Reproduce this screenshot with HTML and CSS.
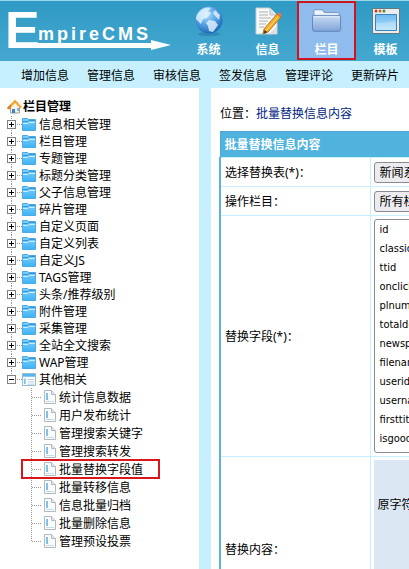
FILE: index.html
```
<!DOCTYPE html>
<html lang="zh-CN">
<head>
<meta charset="utf-8">
<title>EmpireCMS</title>
<link rel="stylesheet" href="styles.css">
</head>
<body>
<svg class="defs" aria-hidden="true">
  <defs>
    <linearGradient id="fold" x1="0" y1="0" x2="0" y2="1"><stop offset="0" stop-color="#7fd0fa"/><stop offset="1" stop-color="#3fb2f4"/></linearGradient>
    <symbol id="folder" viewBox="0 0 14 13"><path d="M.5.5h5l1 1h7v11H.5z" fill="url(#fold)" stroke="#4aa9e6"/><path d="M1 5.500h5l1-1h6" fill="none" stroke="#c9edff"/><path d="M1 3.500h5l1-1h6" fill="none" stroke="#3596d8"/></symbol>
    <symbol id="page" viewBox="0 0 12 14"><path d="M.5.5h7l4 4v9H.5z" fill="#fbfcfd" stroke="#b0b9c0"/><path d="M7.500.5v4h4" fill="#e6eaee" stroke="#b0b9c0"/><path d="M2 3h2v7H2z" fill="#7fc1ea"/><path d="M2 11.500h8" stroke="#c5dcea"/></symbol>
    <symbol id="panel" viewBox="0 0 15 14"><path d="M.5.5h14v13H.5z" fill="#fff" stroke="#8fb4cd"/><path d="M1 1h13v3H1z" fill="#58b4ee"/><path d="M2 6h2v6H2z" fill="#7cc3ee"/><path d="M6 7h7M6 9.500h7M6 12h7" stroke="#a9c9dc"/></symbol>
  </defs>
</svg>
<header class="top">
  <svg class="logo" viewBox="0 0 164 40" role="img" aria-label="EmpireCMS">
    <text class="logo-initial" x="-4" y="37">E</text>
    <text class="logo-name" x="29" y="29">mpireCMS</text>
    <path d="M4 32h138v-3l20 5-20 5v-2H4z" fill="#fff"/>
  </svg>
  <nav class="modules">
    <a href="#system">
      <svg viewBox="0 0 30 30"><defs><radialGradient id="globe" cx=".4" cy=".3" r=".7"><stop offset="0" stop-color="#b9e2ff"/><stop offset=".5" stop-color="#5aa6e8"/><stop offset="1" stop-color="#1c6abb"/></radialGradient></defs><ellipse cx="15" cy="28" rx="11" ry="2" fill="#1c6a94" opacity=".4"/><circle cx="15" cy="14" r="13.500" fill="url(#globe)"/><path d="M5 6c4-5 10-5 12-4l-3 3 3 2-4 5-4 1-2 5-5-5c0-3 1-5 3-7zM15 14l6 1 3 4-5 7-4-1-1-5-2-3zM21 4l5 5-1 5-4-4-2-3z" fill="#e4f4ff" opacity=".8"/></svg>
      <span>系统</span>
    </a>
    <a href="#info">
      <svg viewBox="0 0 30 30"><path d="M3 2h14l7 7v19H3z" fill="#f8f8f6" stroke="#c9cfd2"/><path d="M17 2v7h7" fill="#dfe3e4" stroke="#b9bfc2"/><path d="M6 6h9M6 9h9M6 12h12M6 15h9M6 18h7M6 21h5" stroke="#abb2b6"/><path d="M16 28l8-8v8z" fill="#dde0e0"/><path d="M24 8l4 3-13 15-5 2 1-5z" fill="#f6ae2b" stroke="#b8771c"/><path d="M24 8l2-2 3 3-1 2z" fill="#d77b5c"/><path d="M10.500 28l1-4 3 2z" fill="#493c34"/><path d="M25 11L13 25" stroke="#ffdc75"/></svg>
      <span>信息</span>
    </a>
    <a href="#column" class="current">
      <svg viewBox="0 0 32 30"><defs><linearGradient id="bigfold" x1="0" y1="0" x2="0" y2="1"><stop offset="0" stop-color="#c9dcf4"/><stop offset="1" stop-color="#7fa3d8"/></linearGradient></defs><path d="M2 25V4q0-1 1-1h8l2 3h15q1 0 1 1v18z" fill="#eef4fb" stroke="#6d8fbd"/><path d="M.5 10q0-1 1-1h28q1 0 1 1v14q0 2-2 2h-26q-2 0-2-2z" fill="url(#bigfold)" stroke="#5f84b8"/><path d="M2 10.500h27" stroke="#e8f1fb"/></svg>
      <span>栏目</span>
    </a>
    <a href="#template">
      <svg viewBox="0 0 30 30"><defs><linearGradient id="win" x1="0" y1="0" x2="0" y2="1"><stop offset="0" stop-color="#6cb9f0"/><stop offset="1" stop-color="#b4e2fc"/></linearGradient></defs><path d="M1.500 2.500h27v25h-27z" fill="#e9edef" stroke="#66777f"/><path d="M4.500 8.500h21v16h-21z" fill="url(#win)" stroke="#3786c0"/><path d="M5 17q9 0 20-2v9H5z" fill="#fff" opacity=".25"/><circle cx="5" cy="5" r="1.500" fill="#c73528"/><circle cx="9" cy="5" r="1.500" fill="#bf6f20"/><circle cx="13" cy="5" r="1.500" fill="#3f9332"/></svg>
      <span>模板</span>
    </a>
  </nav>
</header>
<nav class="actions">
  <a href="#add">增加信息</a><a href="#manage">管理信息</a><a href="#review">审核信息</a><a href="#issue">签发信息</a><a href="#comment">管理评论</a><a href="#refresh">更新碎片</a>
</nav>
<div class="workspace">
  <aside class="side">
    <div class="root">
      <svg viewBox="0 0 15 15"><path d="M3.500 7v7h9V7l-4-5z" fill="#f4f1e8" stroke="#a8a095"/><path d="M0 9l8-8.500L15 8l-1.500 1.500L8 4 2 10.500z" fill="#f5a735"/><path d="M0 9l4-4v4l-2 1.500z" fill="#d9832a"/><path d="M5 10h3v4H5z" fill="#3d83c4"/><path d="M10 9h2v3h-2z" fill="#7ab5e1"/></svg>
      <span>栏目管理</span>
    </div>
    <ul class="tree">
      <li><button class="toggle plus" aria-label="展开"></button><svg><use href="#folder"/></svg><a href="#t1">信息相关管理</a></li>
      <li><button class="toggle plus" aria-label="展开"></button><svg><use href="#folder"/></svg><a href="#t2">栏目管理</a></li>
      <li><button class="toggle plus" aria-label="展开"></button><svg><use href="#folder"/></svg><a href="#t3">专题管理</a></li>
      <li><button class="toggle plus" aria-label="展开"></button><svg><use href="#folder"/></svg><a href="#t4">标题分类管理</a></li>
      <li><button class="toggle plus" aria-label="展开"></button><svg><use href="#folder"/></svg><a href="#t5">父子信息管理</a></li>
      <li><button class="toggle plus" aria-label="展开"></button><svg><use href="#folder"/></svg><a href="#t6">碎片管理</a></li>
      <li><button class="toggle plus" aria-label="展开"></button><svg><use href="#folder"/></svg><a href="#t7">自定义页面</a></li>
      <li><button class="toggle plus" aria-label="展开"></button><svg><use href="#folder"/></svg><a href="#t8">自定义列表</a></li>
      <li><button class="toggle plus" aria-label="展开"></button><svg><use href="#folder"/></svg><a href="#t9">自定义JS</a></li>
      <li><button class="toggle plus" aria-label="展开"></button><svg><use href="#folder"/></svg><a href="#t10">TAGS管理</a></li>
      <li><button class="toggle plus" aria-label="展开"></button><svg><use href="#folder"/></svg><a href="#t11">头条/推荐级别</a></li>
      <li><button class="toggle plus" aria-label="展开"></button><svg><use href="#folder"/></svg><a href="#t12">附件管理</a></li>
      <li><button class="toggle plus" aria-label="展开"></button><svg><use href="#folder"/></svg><a href="#t13">采集管理</a></li>
      <li><button class="toggle plus" aria-label="展开"></button><svg><use href="#folder"/></svg><a href="#t14">全站全文搜索</a></li>
      <li><button class="toggle plus" aria-label="展开"></button><svg><use href="#folder"/></svg><a href="#t15">WAP管理</a></li>
      <li class="last"><button class="toggle" aria-label="收起"></button><svg><use href="#panel"/></svg><a href="#t16">其他相关</a></li>
    </ul>
    <ul class="subtree">
      <li><svg><use href="#page"/></svg><a href="#s1">统计信息数据</a></li>
      <li><svg><use href="#page"/></svg><a href="#s2">用户发布统计</a></li>
      <li><svg><use href="#page"/></svg><a href="#s3">管理搜索关键字</a></li>
      <li><svg><use href="#page"/></svg><a href="#s4">管理搜索转发</a></li>
      <li class="marked"><svg><use href="#page"/></svg><a href="#s5">批量替换字段值</a></li>
      <li><svg><use href="#page"/></svg><a href="#s6">批量转移信息</a></li>
      <li><svg><use href="#page"/></svg><a href="#s7">信息批量归档</a></li>
      <li><svg><use href="#page"/></svg><a href="#s8">批量删除信息</a></li>
      <li class="last"><svg><use href="#page"/></svg><a href="#s9">管理预设投票</a></li>
    </ul>
  </aside>
  <main class="main">
    <p class="crumb">位置：<a href="#replace">批量替换信息内容</a></p>
    <table class="form">
      <thead><tr><th colspan="2">批量替换信息内容</th></tr></thead>
      <tbody>
        <tr><td><label for="tbl">选择替换表(*)：</label></td><td><select id="tbl"><option>新闻系统数据表</option></select></td></tr>
        <tr><td><label for="cls">操作栏目：</label></td><td><select id="cls"><option>所有栏目</option></select></td></tr>
        <tr><td><label for="fld">替换字段(*)：</label></td><td><select id="fld" multiple size="12"><option>id</option><option>classid</option><option>ttid</option><option>onclick</option><option>plnum</option><option>totaldown</option><option>newspath</option><option>filename</option><option>userid</option><option>username</option><option>firsttitle</option><option>isgood</option></select></td></tr>
        <tr><td>替换内容：</td><td><div class="pair"><label for="old">原字符</label><textarea id="old"></textarea></div></td></tr>
      </tbody>
    </table>
  </main>
</div>
</body>
</html>
```
FILE: styles.css
```
* { box-sizing: border-box; }
body {
  margin: 0;
  height: 100vh;
  display: flex;
  flex-direction: column;
  overflow: hidden;
  background: #c6f0ff;
  color: #000;
  font: 12px/17px "Noto Sans", "Noto Sans CJK SC", sans-serif;
}
a { color: inherit; text-decoration: none; }
ul { list-style: none; margin: 0; padding: 0; }
svg { flex: none; display: block; }
.defs { position: absolute; width: 0; height: 0; }

.top {
  flex: none;
  display: flex;
  height: 61px;
  overflow: hidden;
  border-top: 1px solid #9bd8ee;
  background: linear-gradient(#2f9ac4, #45a8d0);
}
.logo { width: 164px; height: 40px; margin: 10px 6px 0 9px; overflow: visible; }
.logo text { fill: #fff; font-family: "Liberation Sans", sans-serif; font-weight: bold; }
.logo .logo-initial { font-size: 52px; }
.logo .logo-name { font-size: 18px; letter-spacing: 3px; }
.modules { display: flex; }
.modules a {
  flex: none;
  width: 59px;
  height: 59px;
  display: flex;
  flex-direction: column;
  align-items: center;
  gap: 5px;
  padding-top: 3px;
  border: 2px solid transparent;
  color: #fff;
  font-weight: bold;
}
.modules svg { width: 30px; height: 30px; }
.modules .current { background: #8fbcec; border-color: #cf1420; }

.actions {
  flex: none;
  display: flex;
  gap: 18px;
  height: 27px;
  padding: 6px 0 0 21px;
  white-space: nowrap;
  overflow: hidden;
}
.actions a { flex: none; }

.workspace {
  flex: 1;
  min-height: 0;
  display: grid;
  grid-template-columns: 199px minmax(0, 1fr);
  gap: 12px;
}
.side, .main { background: #fff; overflow: hidden; }

.side { padding: 8px 0 0 7px; white-space: nowrap; }
.root { display: flex; align-items: center; gap: 1px; height: 20px; font-weight: bold; }
.root svg { width: 15px; height: 15px; }
.tree li {
  display: flex;
  align-items: center;
  height: 17px;
  background:
    repeating-linear-gradient(#999 0 1px, transparent 1px 2px) 4px 0 / 1px 100% no-repeat,
    repeating-linear-gradient(90deg, #999 0 1px, transparent 1px 2px) 10px 8px / 5px 1px no-repeat;
}
.tree .last { background-size: 1px 8px, 5px 1px; }
.tree li svg { width: 14px; height: 13px; margin: 0 3px 0 6px; }
.toggle {
  width: 9px;
  height: 9px;
  padding: 0;
  border: 1px solid #808080;
  background: linear-gradient(#000, #000) center / 5px 1px no-repeat, #fff;
}
.toggle.plus { background: linear-gradient(#000, #000) center / 5px 1px no-repeat, linear-gradient(#000, #000) center / 1px 5px no-repeat, #fff; }
.subtree { margin-left: 15px; }
.subtree li {
  display: flex;
  align-items: center;
  gap: 3px;
  height: 18px;
  width: 137px;
  padding-left: 22px;
  background:
    repeating-linear-gradient(#999 0 1px, transparent 1px 2px) 9px 0 / 1px 100% no-repeat,
    repeating-linear-gradient(90deg, #999 0 1px, transparent 1px 2px) 10px 9px / 10px 1px no-repeat;
}
.subtree .last { background-size: 1px 9px, 10px 1px; }
.subtree svg { width: 12px; height: 14px; }
.subtree .marked { outline: 2px solid #d8161c; outline-offset: -1px; }

.main { padding: 17px 0 0 8px; }
.crumb { margin: 0 0 9px 1px; }
.crumb a { color: #00267f; }
.form { width: 480px; border-collapse: collapse; border: 1px solid #4fa9d8; }
.form th { height: 26px; padding: 0 4px; background: #4fb3de; color: #fff; text-align: left; }
.form td { height: 29px; padding: 3px; border: 1px solid #c6f0ff; }
.form td:first-child { width: 150px; padding: 0 4px; border-left: 2px solid #5fb0dc; }
select { display: block; font: inherit; color: inherit; border: 1px solid #8a8a92; border-radius: 3px; }
select:not([multiple]) { height: 21px; width: 150px; padding: 0 1px; background: #ececf0; }
select[multiple] { width: 250px; height: 234px; padding: 2px; background: #fff; font: 11px/17px "DejaVu Sans Condensed", "Noto Sans", sans-serif; }
select[multiple] option { height: 19px; padding: 1px 3px; }
.pair { display: grid; grid-template-columns: 56px 1fr; grid-template-rows: 89px; align-items: center; min-height: 178px; padding: 0 4px; background: #dbe8f4; }
.pair textarea { height: 80px; }
```
